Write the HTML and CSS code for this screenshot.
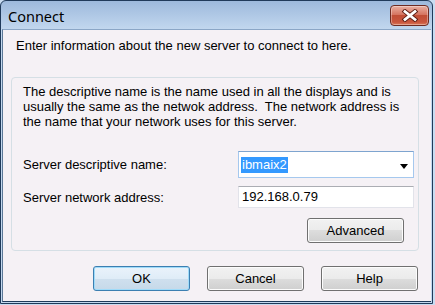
FILE: index.html
```html
<!DOCTYPE html>
<html>
<head>
<meta charset="utf-8">
<link rel="stylesheet" href="styles.css">
</head>
<body>
<div class="window">
  <div class="titlebar">
    <span class="title">Connect</span>
    <button class="close" aria-label="Close">
      <svg width="18" height="13" viewBox="0 0 18 13">
        <path d="M4 2.5 L14 10.5 M14 2.5 L4 10.5" stroke="#5a1a10" stroke-width="4.6" stroke-linecap="square" fill="none"/>
        <path d="M4 2.5 L14 10.5 M14 2.5 L4 10.5" stroke="#ffffff" stroke-width="2.8" stroke-linecap="square" fill="none"/>
      </svg>
    </button>
  </div>
  <div class="client">
    <p class="intro">Enter information about the new server to connect to here.</p>
    <div class="group">
      <p class="desc">The descriptive name is the name used in all the displays and is usually the same as the netwok address.&nbsp; The network address is the name that your network uses for this server.</p>
      <div class="form">
        <label class="lbl">Server descriptive name:</label>
        <div class="combo">
          <span class="sel">ibmaix2</span>
          <span class="arrow"></span>
        </div>
        <label class="lbl">Server network address:</label>
        <div class="textbox">192.168.0.79</div>
      </div>
      <div class="adv-row">
        <button class="btn">Advanced</button>
      </div>
    </div>
    <div class="actions">
      <button class="btn default">OK</button>
      <button class="btn">Cancel</button>
      <button class="btn">Help</button>
    </div>
  </div>
</div>
</body>
</html>
```
FILE: styles.css
```css
html, body {
  margin: 0;
  padding: 0;
}
body {
  width: 435px;
  height: 305px;
  background: #c9dcf1;
  overflow: hidden;
}
.window {
  box-sizing: border-box;
  width: 433px;
  height: 304px;
  border: 1px solid #203a5a;
  border-radius: 6px 6px 0 0;
  background: linear-gradient(#9db9dc, #c3d8ef 29px, #c3d8ef);
  padding: 0 1px 1px 1px;
  display: flex;
  flex-direction: column;
}
.titlebar {
  height: 28px;
  display: flex;
  align-items: center;
  justify-content: space-between;
  padding: 0 2px 0 6px;
  flex: none;
}
.title {
  font-family: "Noto Sans", "Open Sans", sans-serif;
  font-size: 14.5px;
  color: #000;
  margin-top: 1px;
}
.close {
  width: 39px;
  height: 21px;
  margin-top: 1px;
  padding: 0;
  border: 1px solid #6e2b22;
  border-radius: 4px;
  background: linear-gradient(#eab0a2, #d67561 45%, #c14e36 50%, #c9563e 85%, #db7a5a);
  box-shadow: inset 0 0 0 1px rgba(255,255,255,0.35);
  display: flex;
  align-items: center;
  justify-content: center;
}
.client {
  flex: 1;
  background: #f5f1f5;
  border-left: 1px solid #5c7897;
  border-top: 1px solid #8ba6c6;
  border-bottom: 1px solid #203a5a;
  padding: 8px 12px 10px 8px;
  font-family: "Liberation Sans", Arial, sans-serif;
  font-size: 13px;
  color: #000;
  display: flex;
  flex-direction: column;
}
.intro {
  margin: 0 0 0 5px;
  line-height: 15px;
  height: 15px;
}
.group {
  margin-top: 24px;
  height: 174px;
  box-sizing: border-box;
  border: 1px solid #d5dfe5;
  border-radius: 4px;
  padding: 6px 9px 7px 11px;
  display: flex;
  flex-direction: column;
}
.desc {
  margin: 0;
  line-height: 15px;
}
.form {
  margin-top: 22px;
  display: grid;
  grid-template-columns: 215px 176px;
  row-gap: 8px;
  align-items: center;
}
.lbl {
  display: block;
}
.combo {
  height: 27px;
  box-sizing: border-box;
  background: #fff;
  border: 1px solid #a5c8ee;
  border-top-color: #7ea4cf;
  display: flex;
  align-items: center;
  justify-content: space-between;
  padding: 0 5px 0 2px;
}
.sel {
  background: #3399ff;
  color: #fff;
  padding: 1px 1px;
  line-height: 14px;
}
.arrow {
  width: 0;
  height: 0;
  border-left: 4.5px solid transparent;
  border-right: 4.5px solid transparent;
  border-top: 5px solid #000;
  margin-top: 3px;
}
.textbox {
  height: 22px;
  box-sizing: border-box;
  background: #fff;
  border: 1px solid #e2e3ea;
  border-top-color: #abadb3;
  padding: 0 3px;
  line-height: 20px;
}
.adv-row {
  margin-top: 10px;
  display: flex;
  justify-content: flex-end;
  padding-right: 5px;
}
.btn {
  width: 97px;
  height: 25px;
  box-sizing: border-box;
  border: 1px solid #707070;
  border-radius: 3px;
  background: linear-gradient(#f2f2f2, #ebebeb 50%, #dddddd 50%, #cfcfcf);
  box-shadow: inset 0 0 0 1px #fcfcfc;
  font-family: "Liberation Sans", Arial, sans-serif;
  font-size: 13px;
  color: #000;
  padding: 0;
}
.btn.default {
  border-color: #3c7fb1;
  background: linear-gradient(#eaf3fb, #dfecf7 50%, #cfe0ee 50%, #c6d9e9);
  box-shadow: inset 0 0 0 1px #9fdbf9;
}
.actions {
  margin-top: auto;
  display: flex;
  justify-content: flex-end;
  gap: 17px;
  padding-right: 1px;
}
```
